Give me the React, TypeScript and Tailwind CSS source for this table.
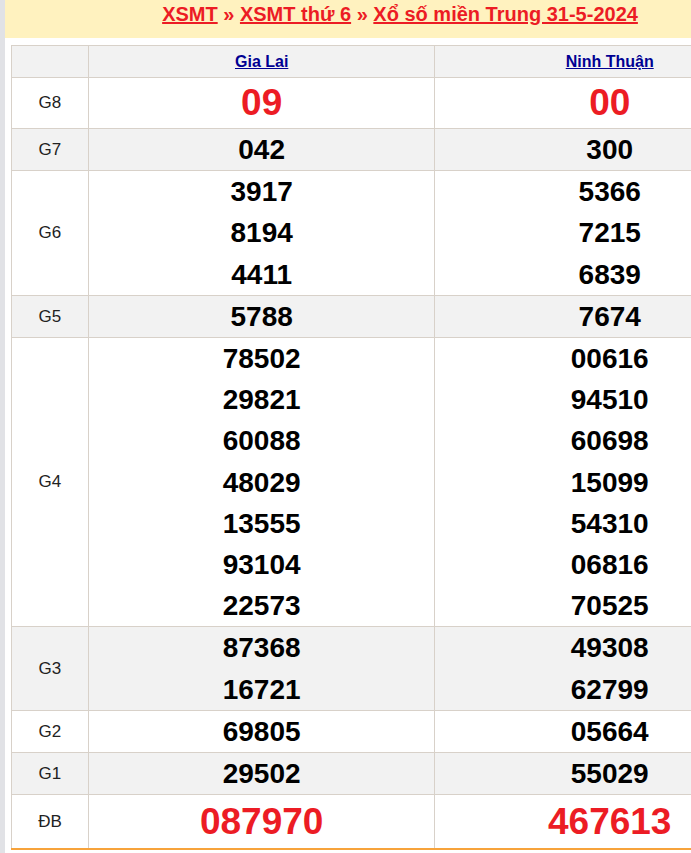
import React from 'react';

type Row = { label: string; a: string[]; b: string[]; big?: boolean; grey?: boolean; h?: string };

const rows: Row[] = [
  { label: 'G8', a: ['09'], b: ['00'], big: true, h: 'h-[50px]' },
  { label: 'G7', a: ['042'], b: ['300'], grey: true },
  { label: 'G6', a: ['3917', '8194', '4411'], b: ['5366', '7215', '6839'] },
  { label: 'G5', a: ['5788'], b: ['7674'], grey: true },
  {
    label: 'G4',
    a: ['78502', '29821', '60088', '48029', '13555', '93104', '22573'],
    b: ['00616', '94510', '60698', '15099', '54310', '06816', '70525'],
  },
  { label: 'G3', a: ['87368', '16721'], b: ['49308', '62799'], grey: true },
  { label: 'G2', a: ['69805'], b: ['05664'] },
  { label: 'G1', a: ['29502'], b: ['55029'], grey: true },
  { label: 'ĐB', a: ['087970'], b: ['467613'], big: true, h: 'h-[54px]' },
];

function Cell({ nums, big, h }: { nums: string[]; big?: boolean; h?: string }) {
  return (
    <td className={`border border-[#d8d1c9] text-center align-middle p-0 ${h ?? ''}`}>
      {nums.map((n, i) =>
        big ? (
          <div key={i} className="text-[37px] font-bold text-[#ec1c24] leading-[50px]">
            {n}
          </div>
        ) : (
          <div key={i} className="text-[28px] font-bold text-black leading-[41.2px]">
            {n}
          </div>
        )
      )}
    </td>
  );
}

export default function App() {
  return (
    <div className="w-[691px] h-[853px] overflow-hidden bg-[#e1e2e6] pl-[5px] font-['Liberation_Sans',Arial,sans-serif]">
      <div className="w-[790px] h-full bg-white">
        <div className="h-[38px] bg-[#fff2bf] flex items-start justify-center pt-[2px]">
          <h1 className="text-[20px] font-bold text-[#ec1c24] leading-[24px]">
            <a className="underline">XSMT</a> » <a className="underline">XSMT thứ 6</a> »{' '}
            <a className="underline">Xổ số miền Trung 31-5-2024</a>
          </h1>
        </div>
        <div className="pt-[7px] pl-[6px]">
          <table className="border-collapse w-[774px] border-b-2 border-b-[#f7a33b]">
            <colgroup>
              <col className="w-[77px]" />
              <col className="w-[347px]" />
              <col className="w-[350px]" />
            </colgroup>
            <thead>
              <tr className="bg-[#f2f2f2] h-[32px]">
                <th className="border border-[#d8d1c9]"></th>
                <th className="border border-[#d8d1c9] text-[16px] font-bold">
                  <a className="underline text-[#000093]">Gia Lai</a>
                </th>
                <th className="border border-[#d8d1c9] text-[16px] font-bold">
                  <a className="underline text-[#000093]">Ninh Thuận</a>
                </th>
              </tr>
            </thead>
            <tbody>
              {rows.map((r) => (
                <tr key={r.label} className={r.grey ? 'bg-[#f2f2f2]' : 'bg-white'}>
                  <td className="border border-[#d8d1c9] text-center text-[17px] text-[#222] p-0">
                    {r.label}
                  </td>
                  <Cell nums={r.a} big={r.big} h={r.h} />
                  <Cell nums={r.b} big={r.big} h={r.h} />
                </tr>
              ))}
            </tbody>
          </table>
        </div>
      </div>
    </div>
  );
}
